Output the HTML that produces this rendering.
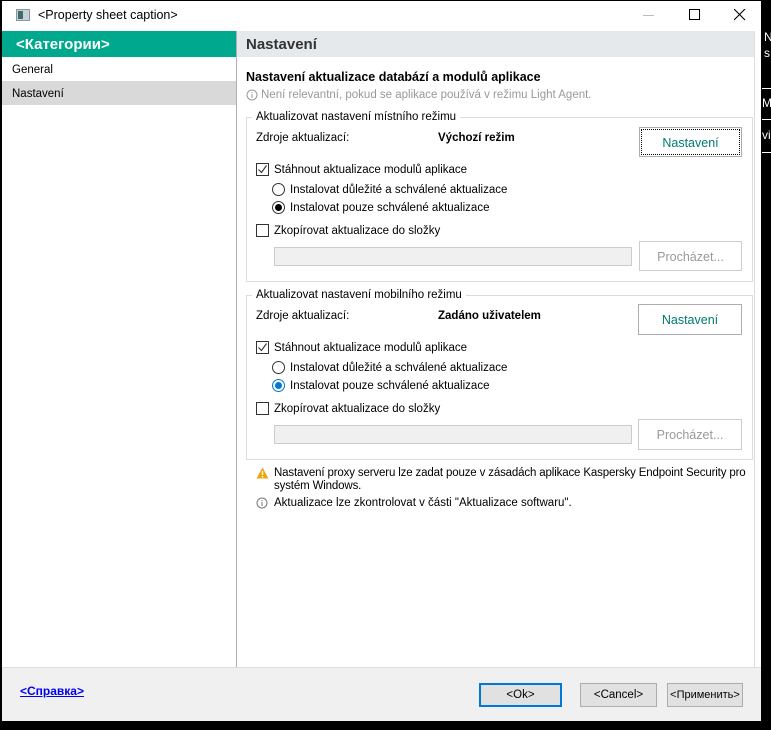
<!DOCTYPE html>
<html><head><meta charset="utf-8"><style>
*{margin:0;padding:0;box-sizing:border-box}
body{width:771px;height:730px;background:#000;position:relative;overflow:hidden;font-family:"Liberation Sans",sans-serif;font-size:11.5px;color:#000}
.a{position:absolute;white-space:nowrap}
.t{margin-top:1px}
.cb{position:absolute;width:13px;height:13px;border:1px solid #333;background:#fff}
.rb{position:absolute;width:13px;height:13px;border:1px solid #333;border-radius:50%;background:#fff}
.rb.on::after{content:"";position:absolute;left:2px;top:2px;width:7px;height:7px;border-radius:50%;background:#000}
.rb.blue{border-color:#0078d7}.rb.blue::after{background:#0078d7}
.btn{position:absolute;border:1px solid #adadad;background:#fff;text-align:center;font-size:12.5px;color:#007a70}
.grp{position:absolute;border:1px solid #dcdcdc}
.inp{position:absolute;background:#f0f0f0;border:1px solid #ccc}
</style></head><body>
<div class="a" style="left:2px;top:1px;width:759px;height:720px;background:#fff"></div>
<div class="a" style="left:16px;top:9px;width:14px;height:12px;background:#c8d0d8;border:1px solid #8a96a0"></div>
<div class="a" style="left:18px;top:11px;width:5px;height:8px;background:#3a6e6a"></div>
<div class="a" style="left:38px;top:8px;font-size:12.5px">&lt;Property sheet caption&gt;</div>
<div class="a" style="left:643px;top:15px;width:11px;height:1px;background:#bbb"></div>
<div class="a" style="left:689px;top:9px;width:11px;height:11px;border:1px solid #000"></div>
<svg class="a" style="left:734px;top:9px" width="12" height="12"><path d="M0 0L11 11M11 0L0 11" stroke="#000" stroke-width="1.1"/></svg>
<div class="a" style="left:2px;top:31px;width:234px;height:26px;background:#00a88e"></div>
<div class="a" style="left:16px;top:36px;color:#fff;font-weight:bold;font-size:15px">&lt;Категории&gt;</div>
<div class="a" style="left:237px;top:31px;width:517px;height:26px;background:#e6e9eb"></div>
<div class="a" style="left:246px;top:36px;color:#333;font-weight:bold;font-size:15px">Nastavení</div>
<div class="a" style="left:236px;top:31px;width:1px;height:636px;background:#b0b0b0"></div>
<div class="a" style="left:754px;top:31px;width:1px;height:636px;background:#ddd"></div>
<div class="a" style="left:12px;top:64px">General</div>
<div class="a" style="left:2px;top:81px;width:234px;height:24px;background:#d9d9d9"></div>
<div class="a" style="left:12px;top:88px">Nastavení</div>
<div class="a" style="left:246px;top:70px;font-weight:bold;font-size:12.5px">Nastavení aktualizace databází a modulů aplikace</div>
<svg class="a" style="left:246px;top:89px" width="12" height="12"><circle cx="6" cy="6" r="5" fill="none" stroke="#999"/><path d="M6 5v4M6 3v1" stroke="#999"/></svg>
<div class="a" style="left:261px;top:89px;color:#999;font-size:11.5px">Není relevantní, pokud se aplikace používá v režimu Light Agent.</div>

<div class="grp" style="left:246px;top:117px;width:507px;height:165px"></div>
<div class="a" style="left:252px;top:111px;background:#fff;padding:0 4px">Aktualizovat nastavení místního režimu</div>
<div class="a" style="left:256px;top:132px">Zdroje aktualizací:</div>
<div class="a" style="left:438px;top:132px;font-weight:bold">Výchozí režim</div>
<div class="btn" style="left:639px;top:127px;width:103px;height:30px;line-height:30px;outline:1px dotted #000;outline-offset:-3px">Nastavení</div>
<div class="cb" style="left:256px;top:163px"><svg width="11" height="11" style="position:absolute;left:0;top:0"><path d="M1.5 5.5l3 3 5-7" fill="none" stroke="#333" stroke-width="1.1"/></svg></div>
<div class="a" style="left:274px;top:164px">Stáhnout aktualizace modulů aplikace</div>
<div class="rb" style="left:272px;top:183px"></div>
<div class="a" style="left:290px;top:184px">Instalovat důležité a schválené aktualizace</div>
<div class="rb on" style="left:272px;top:201px"></div>
<div class="a" style="left:290px;top:202px">Instalovat pouze schválené aktualizace</div>
<div class="cb" style="left:256px;top:224px"></div>
<div class="a" style="left:274px;top:225px">Zkopírovat aktualizace do složky</div>
<div class="inp" style="left:274px;top:247px;width:358px;height:19px"></div>
<div class="btn" style="left:639px;top:241px;width:103px;height:30px;line-height:30px;color:#999;border-color:#ccc">Procházet...</div>

<div class="grp" style="left:246px;top:295px;width:507px;height:165px"></div>
<div class="a" style="left:252px;top:289px;background:#fff;padding:0 4px">Aktualizovat nastavení mobilního režimu</div>
<div class="a" style="left:256px;top:310px">Zdroje aktualizací:</div>
<div class="a" style="left:438px;top:310px;font-weight:bold">Zadáno uživatelem</div>
<div class="btn" style="left:638px;top:304px;width:104px;height:31px;line-height:31px">Nastavení</div>
<div class="cb" style="left:256px;top:341px"><svg width="11" height="11" style="position:absolute;left:0;top:0"><path d="M1.5 5.5l3 3 5-7" fill="none" stroke="#333" stroke-width="1.1"/></svg></div>
<div class="a" style="left:274px;top:342px">Stáhnout aktualizace modulů aplikace</div>
<div class="rb" style="left:272px;top:361px"></div>
<div class="a" style="left:290px;top:362px">Instalovat důležité a schválené aktualizace</div>
<div class="rb on blue" style="left:272px;top:379px"></div>
<div class="a" style="left:290px;top:380px">Instalovat pouze schválené aktualizace</div>
<div class="cb" style="left:256px;top:402px"></div>
<div class="a" style="left:274px;top:403px">Zkopírovat aktualizace do složky</div>
<div class="inp" style="left:274px;top:425px;width:358px;height:19px"></div>
<div class="btn" style="left:638px;top:419px;width:104px;height:31px;line-height:31px;color:#999;border-color:#ccc">Procházet...</div>

<svg class="a" style="left:256px;top:467px" width="13" height="12"><path d="M6.5 0.5L12.5 11.5H0.5Z" fill="#f0a30a"/><path d="M6.5 4v4M6.5 9v1.5" stroke="#fff" stroke-width="1.4"/></svg>
<div class="a" style="left:274px;top:467px;line-height:13px;white-space:normal;width:490px;letter-spacing:-0.15px">Nastavení proxy serveru lze zadat pouze v zásadách aplikace Kaspersky Endpoint Security pro systém Windows.</div>
<svg class="a" style="left:256px;top:497px" width="12" height="12"><circle cx="6" cy="6" r="5" fill="none" stroke="#777"/><path d="M6 5v4M6 3v1" stroke="#777"/></svg>
<div class="a" style="left:274px;top:497px">Aktualizace lze zkontrolovat v části "Aktualizace softwaru".</div>

<div class="a" style="left:2px;top:667px;width:759px;height:54px;background:#f0f0f0;border-top:1px solid #ddd"></div>
<div class="a" style="left:20px;top:684px;color:#0000ee;text-decoration:underline;font-weight:bold;font-size:12px">&lt;Справка&gt;</div>
<div class="a" style="left:479px;top:683px;width:83px;height:24px;border:2px solid #0078d7;background:#e1e1e1;text-align:center;line-height:20px;font-size:11.5px">&lt;Ok&gt;</div>
<div class="a" style="left:580px;top:683px;width:77px;height:24px;border:1px solid #adadad;background:#e1e1e1;text-align:center;line-height:22px;font-size:11.5px">&lt;Cancel&gt;</div>
<div class="a" style="left:667px;top:683px;width:76px;height:24px;border:1px solid #adadad;background:#e1e1e1;text-align:center;line-height:22px;font-size:11px">&lt;Применить&gt;</div>
<div class="a" style="left:764px;top:30px;color:#fff;font-size:12px">N</div>
<div class="a" style="left:764px;top:46px;color:#fff;font-size:12px">s</div>
<div class="a" style="left:762px;top:88px;width:9px;height:1px;background:#fff"></div>
<div class="a" style="left:762px;top:96px;color:#fff;font-size:12px">Ma</div>
<div class="a" style="left:762px;top:119px;width:9px;height:1px;background:#fff"></div>
<div class="a" style="left:762px;top:128px;color:#fff;font-size:12px">vi</div>
<div class="a" style="left:762px;top:152px;width:9px;height:1px;background:#fff"></div>
</body></html>
